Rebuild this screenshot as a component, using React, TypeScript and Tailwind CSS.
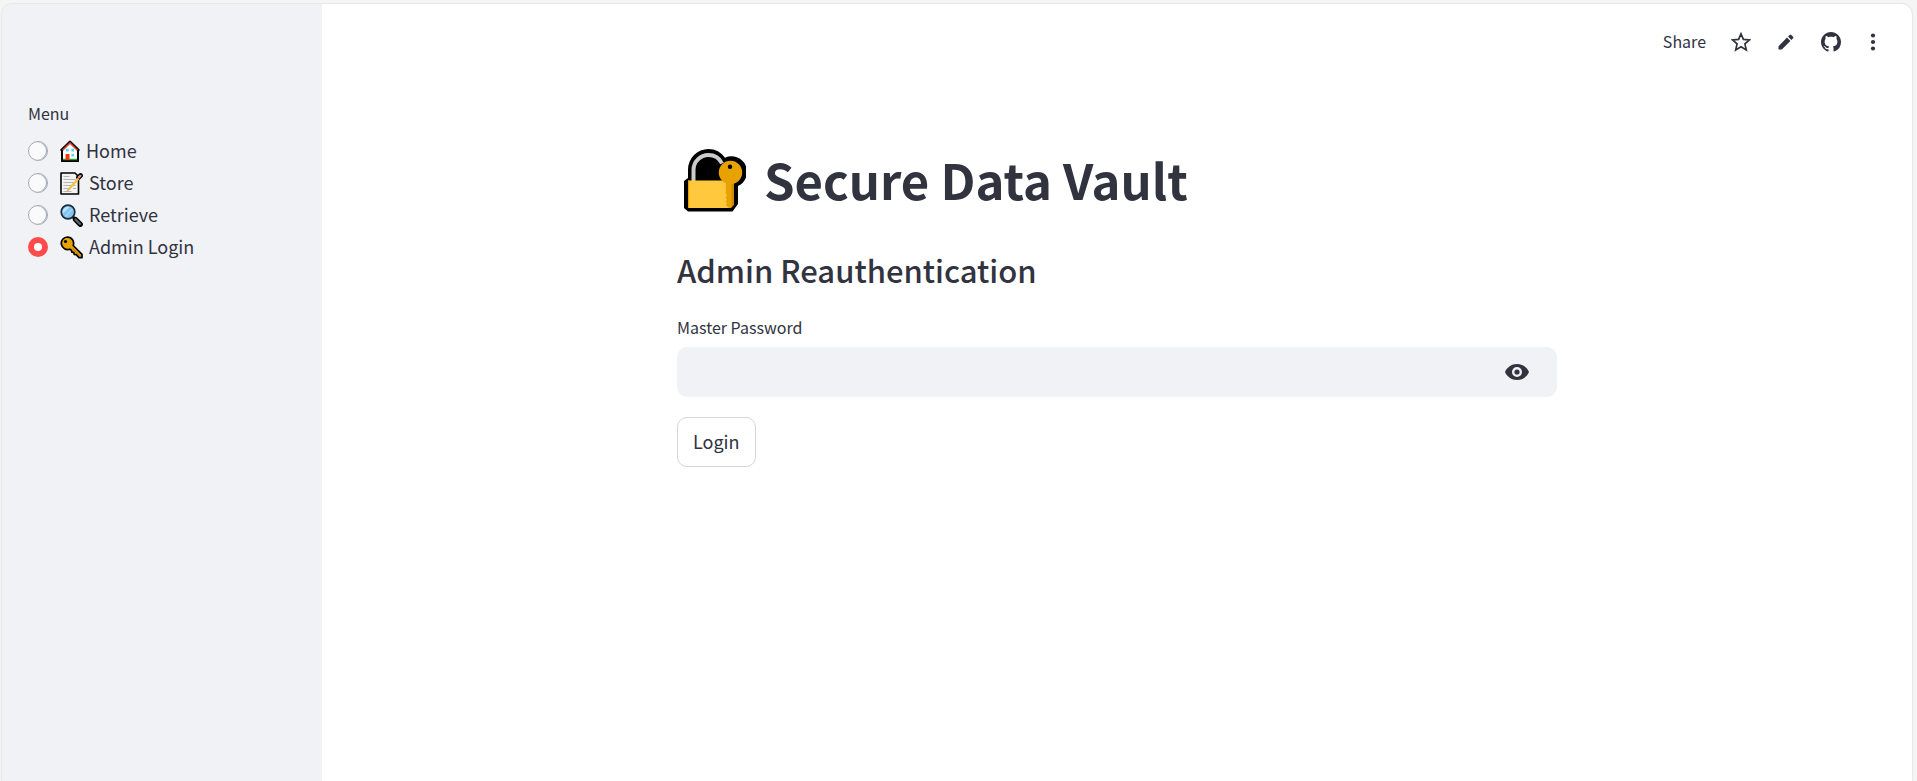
import type { ReactNode, SVGProps } from "react";
import { useState } from "react";

function House(props: SVGProps<SVGSVGElement>) {
  return (
    <svg viewBox="0 0 20 22" aria-hidden="true" {...props}>
      <path d="M2 10v11h16V10L10 2z" fill="#fff" stroke="#000" strokeWidth="2" strokeLinejoin="round" />
      <path d="M1.2 10 10 1.400l8.800 8.600" fill="none" stroke="#000" strokeWidth="1.800" strokeLinejoin="round" strokeLinecap="round" />
      <path d="M2.600 10.200 10 3l7.400 7.200" fill="none" stroke="#e8412c" strokeWidth="1.600" />
      <path d="M3 18.800h14v1.800H3z" fill="#27a52c" />
      <path d="M1 21.200h18" stroke="#000" strokeWidth="1.200" />
      <path d="M5.500 14h4v6h-4z" fill="#f03a17" />
      <path d="M6 8.800h2.600v2.600H6zM11.400 8.800H14v2.600h-2.600zM11.400 14H14v2.600h-2.600z" fill="#4fd5f7" />
    </svg>
  );
}

function Memo(props: SVGProps<SVGSVGElement>) {
  return (
    <svg viewBox="0 0 23 23" aria-hidden="true" {...props}>
      <path d="M1 1h14l3.500 3.500V22H1z" fill="#f2f2f2" stroke="#000" strokeWidth="1.600" strokeLinejoin="round" />
      <path d="M3.500 4.500h6M3.500 7.500h12M3.500 10.500h12M3.500 13.500h12M3.500 16.500h5M13 16.500h3M3.500 19.500h8" stroke="#b5b5b5" strokeWidth="1" />
      <path d="m18.500 5.500 2-2" stroke="#000" strokeWidth="4.800" strokeLinecap="round" />
      <path d="M8.500 17.500 18.500 6.500" stroke="#f9c23c" strokeWidth="2.400" />
      <path d="m18.800 5.400 1.600-1.600" stroke="#e79488" strokeWidth="2.200" strokeLinecap="round" />
      <path d="m7.300 18.800 1.400-1.500" stroke="#ec9c76" strokeWidth="1.400" />
    </svg>
  );
}

function Magnifier(props: SVGProps<SVGSVGElement>) {
  return (
    <svg viewBox="0 0 23 23" aria-hidden="true" {...props}>
      <path d="m12.500 12.500 2.500 2.500" stroke="#000" strokeWidth="3" />
      <path d="m15.500 15.500 4.800 4.800" stroke="#000" strokeWidth="5.200" strokeLinecap="round" />
      <path d="m15.500 15.500 4.500 4.500" stroke="#5a666c" strokeWidth="2.400" strokeLinecap="round" />
      <circle cx="8" cy="8" r="6.800" fill="#83c4f2" stroke="#1d2c36" strokeWidth="1.700" />
      <path d="M3 9.500a5.300 5.300 0 0 1 6.500-6.600z" fill="#bfe3fb" />
      <path d="M5.500 12.500 12.300 5" stroke="#a9d8f8" strokeWidth="1.200" />
    </svg>
  );
}

function Key(props: SVGProps<SVGSVGElement>) {
  return (
    <svg viewBox="0 0 23 23" aria-hidden="true" {...props}>
      <path
        d="M7.500 1A6.300 6.300 0 1 0 9.800 13.200l1.700 1.200.3 1.800 2 .2.400 2 2 .2 2.800 3H22v-3.200L13.200 9.500A6.300 6.300 0 0 0 7.500 1z"
        fill="#e8a200"
        stroke="#000"
        strokeWidth="1.700"
        strokeLinejoin="round"
      />
      <path d="m12.500 12.500 8 7.700" stroke="#b87a00" strokeWidth="1" />
      <circle cx="5.500" cy="5.500" r="1.600" fill="#000" />
    </svg>
  );
}

function LockWithKey(props: SVGProps<SVGSVGElement>) {
  return (
    <svg viewBox="0 0 62 63" aria-hidden="true" {...props}>
      <path d="M4 29V20.500A20.500 20.500 0 0 1 24.500 0 20.500 20.500 0 0 1 41 8.800 15.500 15.500 0 1 1 54 37v18l-5.500 7.500H4L0 59V32z" fill="#000" />
      <path d="M9.500 32V21a15 15 0 0 1 15-15 15 15 0 0 1 13.500 8.500" fill="none" stroke="#ccc" strokeWidth="4" />
      <path d="M4 31.500h42V59H4z" fill="#ffc83d" />
      <path d="M4 31.500h1.200V59H4z" fill="#e8a200" />
      <path d="M42 32h8v23.500l-3 3.500h-2l-3-3 1-1.500-1.300-2 1.300-2-1.300-2 1.300-2-1.300-2z" fill="#e8a200" />
      <path d="M47.500 33H50v22.500L47.500 58z" fill="#d08c00" />
      <circle cx="46.500" cy="23.500" r="11.700" fill="#e8a200" />
      <circle cx="46" cy="17.800" r="2.200" fill="#000" />
    </svg>
  );
}

const items: { name: string; icon: ReactNode }[] = [
  { name: "Home", icon: <House className="h-[22px] w-5" /> },
  { name: "Store", icon: <Memo className="size-[23px]" /> },
  { name: "Retrieve", icon: <Magnifier className="size-[23px]" /> },
  { name: "Admin Login", icon: <Key className="size-[23px]" /> },
];

function Sidebar() {
  const [page, setPage] = useState("Admin Login");
  return (
    <aside className="w-80 shrink-0 bg-[#f0f2f6] px-[26px] pt-[97px]">
      <fieldset>
        <legend className="mb-2.5 text-base leading-6">Menu</legend>
        {items.map(({ name, icon }) => (
          <label key={name} className="flex h-8 items-center text-lg leading-6">
            <input
              type="radio"
              name="menu"
              checked={page === name}
              onChange={() => setPage(name)}
              className="mr-3 size-5 shrink-0 appearance-none rounded-full border border-[#a3a8b4] bg-[#fafafc] shadow-[inset_-1px_0_0_#a3a8b4] checked:border-[6px] checked:border-[#ff4b4b] checked:bg-white checked:shadow-none"
            />
            {icon}
            <span className="ml-1.5 pb-0.5">{name}</span>
          </label>
        ))}
      </fieldset>
    </aside>
  );
}

function Toolbar() {
  return (
    <header className="flex h-[75px] items-center justify-end pr-[29px]">
      <button className="mr-[25px] pb-0.5 text-base">Share</button>
      <button aria-label="Favorite" className="mr-[25px]">
        <svg viewBox="0 0 20 20" className="size-5" fill="none" stroke="currentColor" strokeWidth="1.700" strokeLinejoin="miter">
          <path d="m10 1.800 2.400 5.600 6.100.5-4.600 4 1.400 6L10 14.700l-5.300 3.200 1.400-6-4.600-4 6.100-.5z" />
        </svg>
      </button>
      <button aria-label="Edit source" className="mr-[25px]">
        <svg viewBox="0 0 20 20" className="size-5" fill="currentColor">
          <path d="M2.500 14.200v2.800q0 .5.500.5h2.800L14.400 9 11 5.600zM12 4.600l3.400 3.400 1.700-1.700q.8-.8 0-1.600l-1.800-1.800q-.8-.8-1.600 0z" />
        </svg>
      </button>
      <button aria-label="View on GitHub" className="mr-[22px]">
        <svg viewBox="0 0 16 16" className="size-5" fill="currentColor">
          <path d="M8 0C3.580 0 0 3.580 0 8c0 3.540 2.290 6.530 5.470 7.590.4.070.55-.17.55-.38 0-.19-.01-.82-.01-1.490-2.010.37-2.530-.49-2.690-.94-.09-.23-.48-.94-.82-1.130-.28-.15-.68-.52-.01-.53.63-.01 1.080.58 1.230.82.72 1.210 1.870.87 2.330.66.07-.52.28-.87.51-1.070-1.780-.2-3.640-.89-3.640-3.950 0-.87.31-1.590.82-2.150-.08-.2-.36-1.020.08-2.120 0 0 .67-.21 2.200.82.64-.18 1.320-.27 2-.27s1.360.09 2 .27c1.530-1.040 2.200-.82 2.200-.82.44 1.100.16 1.920.08 2.120.51.56.82 1.270.82 2.150 0 3.070-1.870 3.750-3.650 3.950.29.25.54.73.54 1.480 0 1.070-.01 1.930-.01 2.200 0 .21.15.46.55.38A8.010 8.010 0 0 0 16 8c0-4.420-3.580-8-8-8z" />
        </svg>
      </button>
      <button aria-label="More options">
        <svg viewBox="0 0 20 20" className="size-5" fill="currentColor">
          <circle cx="10" cy="3.500" r="2.100" />
          <circle cx="10" cy="10" r="2.100" />
          <circle cx="10" cy="16.500" r="2.100" />
        </svg>
      </button>
    </header>
  );
}

export default function App() {
  const [visible, setVisible] = useState(false);
  return (
    <div className="flex min-h-screen bg-[#f5f5f5] pt-1 pr-[5px] pl-0.5 font-['Noto_Sans_CJK_SC','Noto_Sans',sans-serif] text-[#31333f]">
      <div className="flex flex-1 overflow-hidden rounded-t-[10px] bg-white shadow-[0_0_2px_#0003]">
        <Sidebar />
        <div className="flex-1">
          <Toolbar />
          <main className="mx-auto w-full max-w-[880px] pt-[68px]">
            <h1 className="flex h-[66px] items-center pl-[7px] text-[49px] leading-[60px] font-bold">
              <LockWithKey className="mr-[18px] h-[63px] w-[62px]" />
              <span className="pb-0.5">Secure Data Vault</span>
            </h1>
            <h2 className="mt-9 text-[31px] leading-[42px] font-medium">Admin Reauthentication</h2>
            <form onSubmit={(event) => event.preventDefault()}>
              <label htmlFor="password" className="mt-6 block text-base leading-6">
                Master Password
              </label>
              <div className="mt-2 flex h-[50px] items-center rounded-[10px] bg-[#f0f2f6] pr-7">
                <input
                  id="password"
                  type={visible ? "text" : "password"}
                  className="h-full min-w-0 flex-1 bg-transparent px-4 text-lg outline-none"
                />
                <button type="button" aria-label="Show password" onClick={() => setVisible(!visible)}>
                  <svg viewBox="0 0 24 16" className="h-4 w-6" fill="currentColor">
                    <path fillRule="evenodd" d="M12 0C6.500 0 2 3.300 0 8c2 4.700 6.500 8 12 8s10-3.300 12-8c-2-4.700-6.500-8-12-8zm0 13a5 5 0 1 1 0-10 5 5 0 0 1 0 10z" />
                    <circle cx="12" cy="8" r="2.600" />
                  </svg>
                </button>
              </div>
              <button className="mt-5 h-[50px] rounded-[10px] border border-[#d6d6d9] px-[15px] pb-0.5 text-lg">Login</button>
            </form>
          </main>
        </div>
      </div>
    </div>
  );
}
